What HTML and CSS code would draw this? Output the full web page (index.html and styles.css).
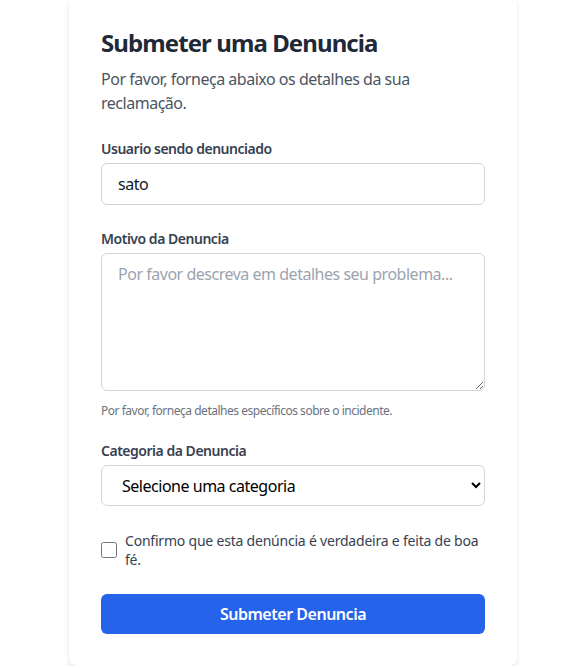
FILE: index.html
```html
<!DOCTYPE html>
<html lang="pt">
<head>
<meta charset="utf-8">
<title>Submeter uma Denuncia</title>
<link rel="stylesheet" href="styles.css">
</head>
<body>
<main class="page">
  <form class="card">
    <h1 class="title">Submeter uma Denuncia</h1>
    <p class="subtitle">Por favor, forneça abaixo os detalhes da sua reclamação.</p>

    <div class="field">
      <label class="label" for="user">Usuario sendo denunciado</label>
      <input class="input" id="user" type="text" value="sato">
    </div>

    <div class="field field-help">
      <label class="label" for="reason">Motivo da Denuncia</label>
      <textarea class="textarea" id="reason" placeholder="Por favor descreva em detalhes seu problema..."></textarea>
      <p class="help">Por favor, forneça detalhes específicos sobre o incidente.</p>
    </div>

    <div class="field">
      <label class="label" for="cat">Categoria da Denuncia</label>
      <select class="select" id="cat">
        <option>Selecione uma categoria</option>
      </select>
    </div>

    <div class="check-row">
      <input class="checkbox" id="confirm" type="checkbox">
      <label class="check-label" for="confirm">Confirmo que esta denúncia é verdadeira e feita de boa fé.</label>
    </div>

    <button class="submit" type="button">Submeter Denuncia</button>
  </form>
</main>
</body>
</html>
```

FILE: styles.css
```css
* { box-sizing: border-box; }

html, body {
  margin: 0;
  padding: 0;
  background: #ffffff;
}

body {
  font-family: "Noto Sans", "Open Sans", Arial, sans-serif;
  color: #1f2937;
  letter-spacing: -0.03em;
}

.page {
  display: flex;
  justify-content: center;
}

.card {
  width: 448px;
  margin-top: -5px;
  margin-right: 1px;
  background: #ffffff;
  border-radius: 8px;
  box-shadow: 0 4px 6px -1px rgba(0,0,0,0.1), 0 2px 4px -2px rgba(0,0,0,0.1);
  padding: 32px;
  display: flex;
  flex-direction: column;
}

.title {
  margin: 0 0 8px;
  font-size: 24px;
  line-height: 32px;
  font-weight: 700;
  color: #1f2937;
  letter-spacing: -0.038em;
}

.subtitle {
  margin: 0 0 24px;
  font-size: 16px;
  line-height: 24px;
  color: #4b5563;
}

.field {
  display: flex;
  flex-direction: column;
  margin-bottom: 24px;
}

.field-help {
  margin-bottom: 22px;
}

.label {
  font-size: 14px;
  line-height: 20px;
  font-weight: 600;
  color: #374151;
  margin-bottom: 4px;
}

.input, .textarea, .select {
  font-family: inherit;
  font-size: 16px;
  letter-spacing: inherit;
  color: #111827;
  border: 1px solid #d1d5db;
  border-radius: 6px;
  background: #ffffff;
  width: 100%;
}

.input {
  height: 42px;
  padding: 8px 16px;
}

.textarea {
  height: 138px;
  padding: 8px 16px;
  line-height: 24px;
  resize: vertical;
  display: block;
}

.textarea::placeholder { color: #9ca3af; }

.help {
  margin: 12px 0 0;
  font-size: 12px;
  line-height: 16px;
  color: #6b7280;
}

.select {
  height: 41px;
  padding: 8px 14px 8px 16px;
  color: #000000;
}

.check-row {
  display: flex;
  align-items: center;
  gap: 8px;
  padding-top: 1px;
  margin-bottom: 25px;
}

.checkbox {
  width: 16px;
  height: 16px;
  margin: 0;
  flex: none;
}

.check-label {
  font-size: 14px;
  line-height: 19px;
  color: #374151;
  letter-spacing: -0.015em;
}

.submit {
  height: 40px;
  border: none;
  border-radius: 6px;
  background: #2563eb;
  color: #ffffff;
  font-family: inherit;
  font-size: 16px;
  font-weight: 600;
  letter-spacing: inherit;
  width: 100%;
}
```
